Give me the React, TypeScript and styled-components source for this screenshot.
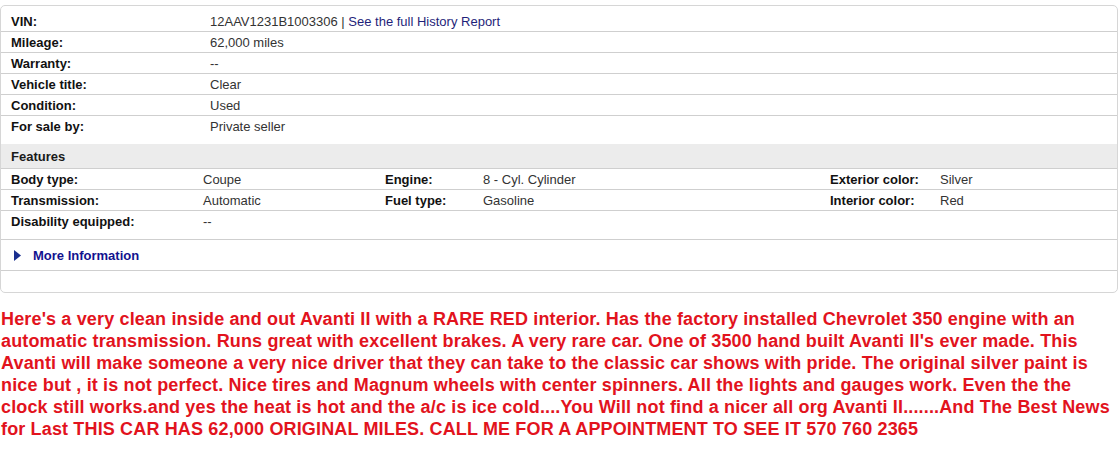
import React from 'react';
import styled, { createGlobalStyle } from 'styled-components';

const GlobalStyle = createGlobalStyle`
  html, body {
    margin: 0;
    padding: 0;
    background: #ffffff;
  }
  body {
    font-family: "Liberation Sans", Arial, Helvetica, sans-serif;
    font-size: 13px;
    color: #333333;
  }
`;

const Page = styled.div`
  width: 1120px;
  padding-top: 5px;
`;

const DetailsBox = styled.div`
  width: 1116px;
  border: 1px solid #d6d6d6;
  border-radius: 5px;
  padding-bottom: 21px;
`;

const InfoRow = styled.div<{ $first?: boolean; $last?: boolean }>`
  display: grid;
  grid-template-columns: 199px 1fr;
  align-items: center;
  height: 20px;
  padding: ${({ $first }) => ($first ? '5px' : '0')} 0 0 10px;
  border-bottom: ${({ $last }) => ($last ? 'none' : '1px solid #cfcfcf')};
  margin-bottom: ${({ $last }) => ($last ? '8px' : '0')};
`;

const FeatureRow = styled.div<{ $tall?: boolean }>`
  display: grid;
  grid-template-columns: 192px 182px 98px 347px 110px 1fr;
  align-items: center;
  height: 20px;
  padding: 0 0 ${({ $tall }) => ($tall ? '8px' : '0')} 10px;
  border-bottom: 1px solid #cfcfcf;
`;

const SectionHeader = styled.div`
  display: flex;
  align-items: center;
  height: 24px;
  padding-left: 10px;
  background: #ececec;
  border-bottom: 1px solid #cfcfcf;
  font-weight: bold;
  color: #1a1a1a;
`;

const Label = styled.span`
  font-weight: bold;
  color: #111111;
  white-space: nowrap;
`;

const Value = styled.span`
  color: #333333;
  white-space: nowrap;
`;

const Link = styled.a`
  color: #1f1f7a;
  text-decoration: none;
`;

const MoreRow = styled.div`
  display: flex;
  align-items: center;
  gap: 12px;
  height: 30px;
  padding-left: 13px;
  border-bottom: 1px solid #cfcfcf;
`;

const MoreLink = styled.a`
  color: #12128f;
  font-weight: bold;
  text-decoration: none;
`;

const Description = styled.p`
  margin: 15px 0 0;
  padding-left: 1px;
  width: 1112px;
  color: #e2131d;
  font-weight: bold;
  font-size: 18px;
  line-height: 22px;
  letter-spacing: 0.15px;
`;

const Triangle = () => (
  <svg width="7" height="11" viewBox="0 0 7 11" aria-hidden="true">
    <path d="M0 0 L7 5.5 L0 11 Z" fill="#1a2f8f" />
  </svg>
);

const info: [string, React.ReactNode][] = [
  [
    'VIN:',
    <>
      12AAV1231B1003306 | <Link href="#">See the full History Report</Link>
    </>,
  ],
  ['Mileage:', '62,000 miles'],
  ['Warranty:', '--'],
  ['Vehicle title:', 'Clear'],
  ['Condition:', 'Used'],
  ['For sale by:', 'Private seller'],
];

const features: string[][] = [
  ['Body type:', 'Coupe', 'Engine:', '8 - Cyl. Cylinder', 'Exterior color:', 'Silver'],
  ['Transmission:', 'Automatic', 'Fuel type:', 'Gasoline', 'Interior color:', 'Red'],
  ['Disability equipped:', '--', '', '', '', ''],
];

export default function App() {
  return (
    <Page>
      <GlobalStyle />
      <DetailsBox>
        {info.map(([label, value], i) => (
          <InfoRow key={label} $first={i === 0} $last={i === info.length - 1}>
            <Label>{label}</Label>
            <Value>{value}</Value>
          </InfoRow>
        ))}
        <SectionHeader>Features</SectionHeader>
        {features.map((row, i) => (
          <FeatureRow key={row[0]} $tall={i === features.length - 1}>
            {row.map((cell, j) =>
              j % 2 === 0 ? <Label key={j}>{cell}</Label> : <Value key={j}>{cell}</Value>
            )}
          </FeatureRow>
        ))}
        <MoreRow>
          <Triangle />
          <MoreLink href="#">More Information</MoreLink>
        </MoreRow>
      </DetailsBox>
      <Description>
        Here's a very clean inside and out Avanti II with a RARE RED interior. Has the factory
        installed Chevrolet 350 engine with an automatic transmission. Runs great with excellent
        brakes. A very rare car. One of 3500 hand built Avanti II's ever made. This Avanti will
        make someone a very nice driver that they can take to the classic car shows with pride.
        The original silver paint is nice but , it is not perfect. Nice tires and Magnum wheels
        with center spinners. All the lights and gauges work. Even the the clock still works.and
        yes the heat is hot and the a/c is ice cold....You Will not find a nicer all org Avanti
        II.......And The Best News for Last THIS CAR HAS 62,000 ORIGINAL MILES. CALL ME FOR A
        APPOINTMENT TO SEE IT 570 760 2365
      </Description>
    </Page>
  );
}
